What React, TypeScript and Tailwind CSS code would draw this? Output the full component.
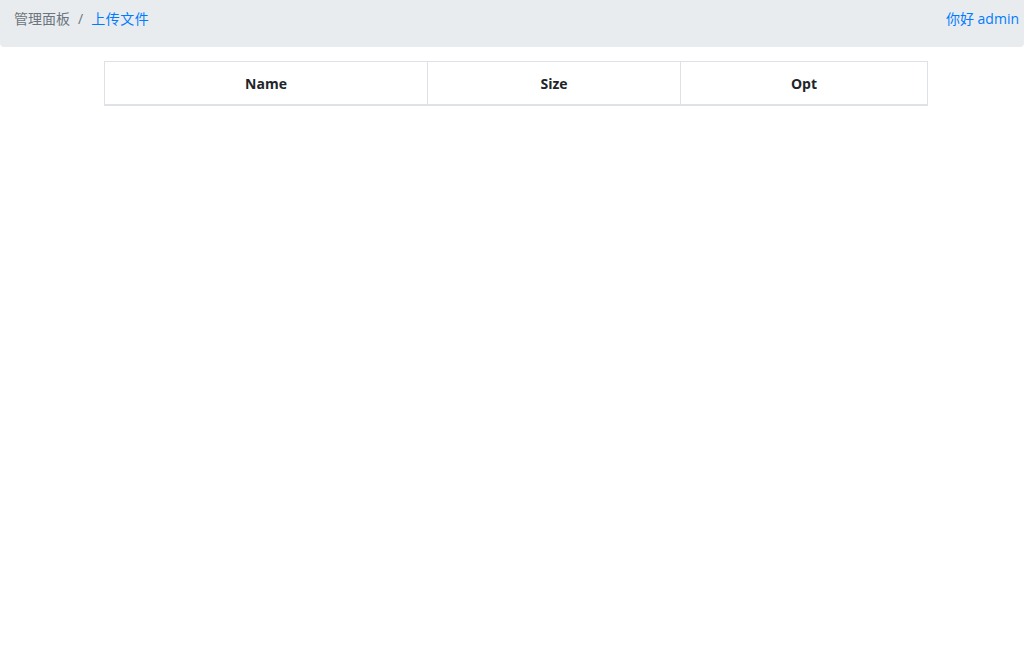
import React from 'react';

export default function App() {
  return (
    <div className="min-h-screen bg-white text-[#212529] text-[14px]" style={{ fontFamily: '"Open Sans", "Noto Sans CJK SC", sans-serif' }}>
      <nav className="flex items-center justify-between bg-[#e9ecef] rounded-b-[4px] h-[47px] px-[14px] pb-[11px]">
        <ol className="flex items-center">
          <li className="text-[#6c757d]">管理面板</li>
          <li className="text-[#6c757d] px-[8px]">/</li>
          <li className="text-[#007bff] tracking-[0.5px]">上传文件</li>
        </ol>
        <span className="text-[#007bff] -mr-[9px]">你好 admin</span>
      </nav>
      <div className="px-[104px] pt-[14px]">
        <table className="w-[824px] border-collapse border border-[#dee2e6]">
          <thead>
            <tr className="h-[43px]">
              <th className="w-[323px] pt-[2px] border border-[#dee2e6] border-b-2 font-bold text-center">Name</th>
              <th className="w-[253px] pt-[2px] border border-[#dee2e6] border-b-2 font-bold text-center">Size</th>
              <th className="pt-[2px] border border-[#dee2e6] border-b-2 font-bold text-center">Opt</th>
            </tr>
          </thead>
          <tbody></tbody>
        </table>
      </div>
    </div>
  );
}
